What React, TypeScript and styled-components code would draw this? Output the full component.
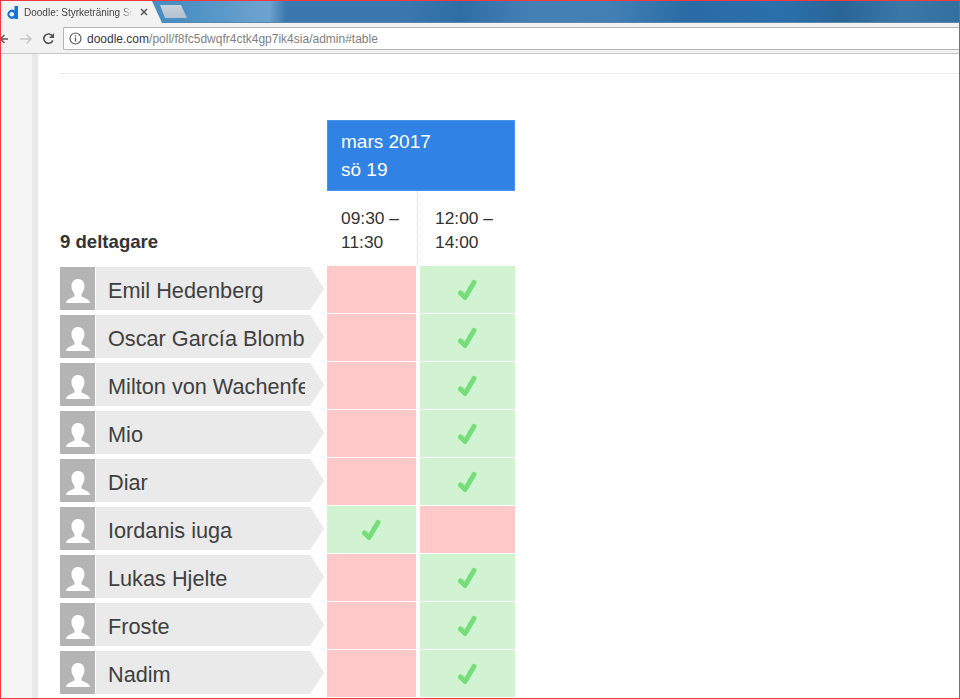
import styled, { createGlobalStyle } from "styled-components";

const GlobalStyle = createGlobalStyle`
  html, body {
    margin: 0;
    padding: 0;
    height: 100%;
    background: #fff;
    overflow: hidden;
  }
  * {
    box-sizing: border-box;
  }
`;

const Frame = styled.div`
  width: 960px;
  height: 699px;
  border: 1px solid #f2393f;
  font-family: "Liberation Sans", Arial, sans-serif;
  color: #333;
  overflow: hidden;
  display: flex;
  flex-direction: column;
`;

const TabStrip = styled.div`
  height: 22px;
  flex: none;
  display: flex;
  align-items: flex-end;
  background: linear-gradient(90deg, #3d86bd 0, #4a8fc3 180px, #6fa3cf 268px, #3a78ae 285px, #3a78ae 400px, #2f6ea5 460px, #4480b4 530px, #4280b4 610px, #2a6ba5 690px, #2b70ac 780px, #2a6496 840px, #3a78a8 900px, #33709f 960px);
  border-bottom: 1px solid #5b86ab;
`;

const Tab = styled.div`
  width: 161px;
  height: 22px;
  margin-bottom: -1px;
  background: #f2f2f2;
  clip-path: polygon(0 0, 151px 0, 161px 22px, 0 22px);
  display: flex;
  align-items: center;
  padding-left: 5px;
  flex: none;
`;

const TabTitle = styled.span`
  font-size: 10px;
  color: #444;
  width: 108px;
  margin: 0 8px 0 6px;
  white-space: nowrap;
  overflow: hidden;
  mask-image: linear-gradient(90deg, #000 90%, transparent);
`;

const NewTab = styled.div`
  width: 27px;
  height: 13px;
  margin: 0 0 4px -2px;
  background: linear-gradient(#c8d1dc, #b4c1d0);
  clip-path: polygon(0 0, 21px 0, 27px 13px, 5px 13px);
`;

const Toolbar = styled.div`
  height: 31px;
  flex: none;
  background: #f2f2f2;
  border-bottom: 1px solid #c8c8c8;
  display: flex;
  align-items: center;
  padding: 4px 0 3px;
`;

const NavIcon = styled.svg<{ $left?: number }>`
  flex: none;
  display: block;
  margin-left: ${({ $left }) => $left ?? 0}px;
`;

const AddressBox = styled.div`
  flex: 1;
  height: 23px;
  margin-left: 8px;
  background: #fff;
  border: 1px solid #b4b4b4;
  border-right: none;
  border-radius: 2px 0 0 2px;
  display: flex;
  align-items: center;
  padding-left: 5px;
  font-size: 12px;
  white-space: nowrap;
`;

const Host = styled.span`
  color: #3a3448;
  margin-left: 5px;
`;

const UrlPath = styled.span`
  color: #808080;
`;

const Body = styled.div`
  flex: 1;
  display: flex;
  min-height: 0;
`;

const SideGutter = styled.div`
  width: 37px;
  flex: none;
  background: #f5f5f5;
  border-right: 6px solid #e9e9e9;
`;

const Page = styled.div`
  flex: 1;
  padding-left: 22px;
  min-width: 0;
`;

const TopRule = styled.div`
  height: 1px;
  margin-top: 19px;
  background: #ececec;
`;

const PollTable = styled.div`
  display: grid;
  grid-template-columns: 267px 89px 4px 95px;
  margin-top: 46px;
`;

const DateHead = styled.div`
  grid-column: 2 / 5;
  height: 71px;
  background: #3083e4;
  border: 1px solid #4a94ea;
  color: #fff;
  font-size: 19px;
  line-height: 28px;
  padding: 7px 0 0 13px;
`;

const CountLabel = styled.div`
  grid-column: 1;
  height: 75px;
  font-size: 18.6px;
  font-weight: 700;
  display: flex;
  align-items: flex-end;
  padding-bottom: 13px;
`;

const TimeCell = styled.div<{ $inset: number }>`
  height: 75px;
  font-size: 17.4px;
  line-height: 24px;
  padding: 15px 0 0 ${({ $inset }) => $inset}px;
  white-space: pre-line;
`;

const TimeGap = styled.div`
  border-left: 1px dotted #d8d8d8;
  margin-left: 1px;
`;

const Participant = styled.div`
  grid-column: 1;
  height: 48px;
  padding-top: 1px;
  display: flex;
`;

const Avatar = styled.div`
  width: 35px;
  height: 43px;
  background: #b4b4b4;
  flex: none;
  display: flex;
  align-items: flex-end;
  justify-content: center;
  padding-bottom: 7px;
`;

const NameTag = styled.div`
  width: 229px;
  height: 43px;
  flex: none;
  margin-left: 1px;
  background: #eaeaea;
  clip-path: polygon(0 0, 214px 0, 228px 21.5px, 214px 100%, 0 100%);
  padding-left: 12px;
  font-size: 21.7px;
  line-height: 47px;
  color: #404040;
`;

const NameClip = styled.div`
  width: 197px;
  overflow: hidden;
  white-space: nowrap;
`;

const Vote = styled.div<{ $yes: boolean }>`
  height: 48px;
  background: ${({ $yes }) => ($yes ? "#d1f3d1" : "#ffc9c9")};
  border-bottom: 1px solid #fff;
  display: flex;
  align-items: center;
  justify-content: center;
`;

const Gap = styled.div``;

const rows: [string, boolean][] = [
  ["Emil Hedenberg", false],
  ["Oscar García Blomberg", false],
  ["Milton von Wachenfeldt", false],
  ["Mio", false],
  ["Diar", false],
  ["Iordanis iuga", true],
  ["Lukas Hjelte", false],
  ["Froste", false],
  ["Nadim", false],
];

function Check() {
  return (
    <svg width="22" height="24" viewBox="0 0 22 24">
      <path
        d="M3.500 15 L8 19.500 L17 4.500"
        fill="none"
        stroke="#78de7c"
        strokeWidth="5"
        strokeLinecap="round"
        strokeLinejoin="round"
      />
    </svg>
  );
}

function Person() {
  return (
    <svg width="24" height="24" viewBox="0 0 24 24">
      <path
        d="M12 0c4 0 6.500 3 6.500 7 0 3.500-1.500 6-3 8v2c0 1.500 8.500 2.500 8.500 7H0c0-4.500 8.500-5.500 8.500-7v-2c-1.500-2-3-4.500-3-8 0-4 2.500-7 6.500-7z"
        fill="#fff"
      />
    </svg>
  );
}

function Row({ name, first }: { name: string; first: boolean }) {
  return (
    <>
      <Participant>
        <Avatar>
          <Person />
        </Avatar>
        <NameTag>
          <NameClip>{name}</NameClip>
        </NameTag>
      </Participant>
      <Vote $yes={first}>{first ? <Check /> : null}</Vote>
      <Gap />
      <Vote $yes={!first}>{!first ? <Check /> : null}</Vote>
    </>
  );
}

export default function App() {
  return (
    <>
      <GlobalStyle />
      <Frame>
        <TabStrip>
          <Tab>
            <NavIcon width="12" height="13" viewBox="0 0 12 13">
              <path
                d="M8.500 0H12v13H8.500v-1a4.500 4.500 0 1 1 0-7.500z"
                fill="#1473d8"
              />
              <circle cx="5.800" cy="8.200" r="2.300" fill="#f2f2f2" />
            </NavIcon>
            <TabTitle>Doodle: Styrketräning Sö</TabTitle>
            <NavIcon width="8" height="8" viewBox="0 0 8 8">
              <path d="M1 1l6 6M7 1l-6 6" stroke="#555" strokeWidth="1.500" />
            </NavIcon>
          </Tab>
          <NewTab />
        </TabStrip>
        <Toolbar>
          <NavIcon width="7" height="14" viewBox="0 0 7 14">
            <path d="M7 7H0M3.500 3L-.5 7l4 4" fill="none" stroke="#5a5a5a" strokeWidth="1.500" />
          </NavIcon>
          <NavIcon width="14" height="14" viewBox="0 0 14 14" $left={11}>
            <path d="M1 7h11M7.500 2.500L12 7l-4.500 4.500" fill="none" stroke="#c8c8c8" strokeWidth="1.500" />
          </NavIcon>
          <NavIcon width="13" height="13" viewBox="0 0 14 14" $left={9}>
            <path d="M11.600 9a5 5 0 1 1-.4-4.500" fill="none" stroke="#555" strokeWidth="1.800" />
            <path d="M13 1v5.500H7.500z" fill="#555" />
          </NavIcon>
          <AddressBox>
            <NavIcon width="13" height="13" viewBox="0 0 13 13">
              <circle cx="6.500" cy="6.500" r="5.500" fill="none" stroke="#5a5a5a" strokeWidth="1.200" />
              <path d="M6.500 5.500v4M6.500 3.200v1.300" stroke="#5a5a5a" strokeWidth="1.300" />
            </NavIcon>
            <Host>doodle.com</Host>
            <UrlPath>/poll/f8fc5dwqfr4ctk4gp7ik4sia/admin#table</UrlPath>
          </AddressBox>
        </Toolbar>
        <Body>
          <SideGutter />
          <Page>
            <TopRule />
            <PollTable>
              <Gap />
              <DateHead>
                mars 2017
                <br />
                sö 19
              </DateHead>
              <CountLabel>9 deltagare</CountLabel>
              <TimeCell $inset={14}>{"09:30 –\n11:30"}</TimeCell>
              <TimeGap />
              <TimeCell $inset={15}>{"12:00 –\n14:00"}</TimeCell>
              {rows.map(([name, first]) => (
                <Row key={name} name={name} first={first} />
              ))}
            </PollTable>
          </Page>
        </Body>
      </Frame>
    </>
  );
}
